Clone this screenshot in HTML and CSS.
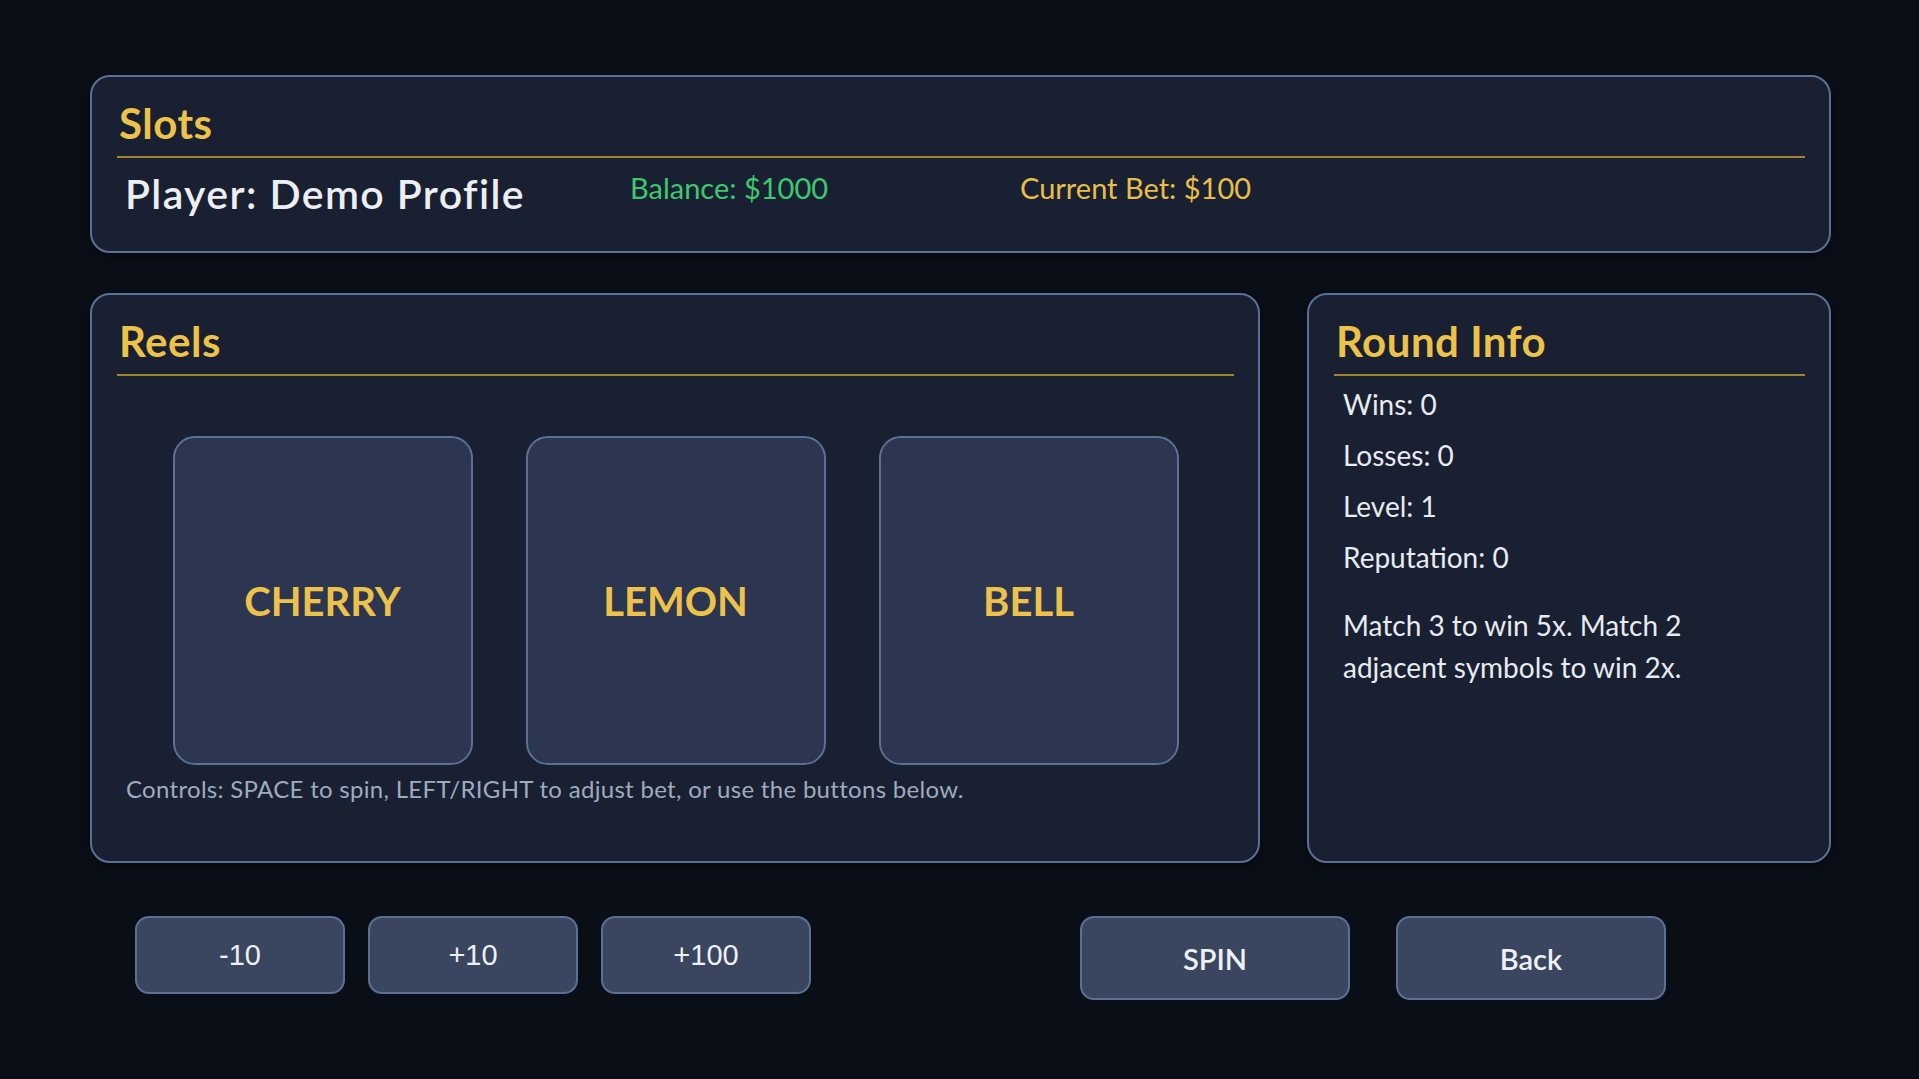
FILE: index.html
```html
<!DOCTYPE html>
<html lang="en">
  <head>
    <meta charset="UTF-8" />
    <meta name="viewport" content="width=device-width, initial-scale=1.0" />
    <title>Slots</title>
    <link rel="stylesheet" href="styles.css">
  </head>
  <body>
    <div class="screen">
      <!-- Player summary -->
      <section class="panel header-panel">
        <h1 class="panel-title">Slots</h1>
        <div class="status-row">
          <span class="player">Player: Demo Profile</span>
          <span class="balance">Balance: $1000</span>
          <span class="current-bet">Current Bet: $100</span>
        </div>
      </section>

      <div class="main-row">
        <section class="panel reels-panel">
          <h2 class="panel-title">Reels</h2>
          <div class="reels">
            <div class="reel">CHERRY</div>
            <div class="reel">LEMON</div>
            <div class="reel">BELL</div>
          </div>
          <p class="controls-hint">
            Controls: SPACE to spin, LEFT/RIGHT to adjust bet, or use the buttons below.
          </p>
        </section>

        <section class="panel info-panel">
          <h2 class="panel-title">Round Info</h2>
          <ul class="stats">
            <li>Wins: 0</li>
            <li>Losses: 0</li>
            <li>Level: 1</li>
            <li>Reputation: 0</li>
          </ul>
          <p class="rules">Match 3 to win 5x. Match 2 adjacent symbols to win 2x.</p>
        </section>
      </div>

      <div class="actions">
        <div class="bet-buttons">
          <button class="bet-button">-10</button>
          <button class="bet-button">+10</button>
          <button class="bet-button">+100</button>
        </div>
        <div class="round-buttons">
          <button class="round-button">SPIN</button>
          <button class="round-button">Back</button>
        </div>
      </div>
    </div>
  </body>
</html>
```

FILE: styles.css
```css
/* General Styles */
body {
  margin: 0;
  background-color: #0a0e16;
  font-family: "Lato", "DejaVu Sans", sans-serif;
  color: #e8ebf0;
}

.screen {
  width: 1919px;
  height: 1079px;
  box-sizing: border-box;
  padding: 75px 88px 0 90px;
}

/* Panels */
.panel {
  box-sizing: border-box;
  background-color: #182032;
  border: 2px solid #5a7096;
  border-radius: 20px;
  padding: 22px 24px 0 25px;
  box-shadow: 0 2px 6px rgba(0, 0, 0, 0.45);
}

.panel-title {
  margin: 0;
  padding: 0 0 9px 2px;
  font-size: 42px;
  line-height: 48px;
  font-weight: 700;
  letter-spacing: 0.5px;
  color: #ecc24a;
  border-bottom: 2px solid #a2822f;
}

.header-panel {
  height: 178px;
}

.status-row {
  display: grid;
  grid-template-columns: 505px 390px auto;
  align-items: start;
  margin-top: 12px;
  padding-left: 8px;
}

.player {
  font-size: 41px;
  line-height: 48px;
  font-weight: 600;
  letter-spacing: 1.4px;
  color: #eceef2;
}

.balance,
.current-bet {
  font-size: 29px;
}

.balance {
  color: #3ec86e;
}

.current-bet {
  color: #e8be4a;
}

/* Reels and round info */
.main-row {
  display: grid;
  grid-template-columns: 1170px 524px;
  gap: 47px;
  margin-top: 40px;
  height: 570px;
}

.reels {
  display: flex;
  justify-content: center;
  gap: 53px;
  margin-top: 60px;
}

.reel {
  box-sizing: border-box;
  width: 300px;
  height: 329px;
  background-color: #2c3650;
  border: 2px solid #5a7096;
  border-radius: 22px;
  display: flex;
  align-items: center;
  justify-content: center;
  font-size: 40px;
  font-weight: 700;
  color: #ecc24a;
}

.controls-hint {
  margin: 9px 0 0;
  padding-left: 9px;
  font-size: 24px;
  letter-spacing: 0.3px;
  color: #9fabbf;
}

.stats {
  list-style: none;
  margin: 3px 0 0;
  padding: 0 0 0 9px;
  font-size: 28px;
  line-height: 51px;
}

.rules {
  margin: 21px 0 0;
  padding-left: 9px;
  max-width: 400px;
  font-size: 28px;
  line-height: 42px;
}

/* Buttons */
.actions {
  display: flex;
  align-items: flex-start;
  margin-top: 53px;
  padding-left: 45px;
}

.bet-buttons,
.round-buttons {
  display: flex;
}

.bet-buttons {
  gap: 23px;
}

.round-buttons {
  gap: 46px;
  margin-left: 269px;
}

.bet-button,
.round-button {
  box-sizing: border-box;
  background-color: #3a4660;
  border: 2px solid #5b7094;
  border-radius: 14px;
  color: #eef0f4;
  cursor: pointer;
  padding: 0;
}

.bet-button {
  width: 210px;
  height: 78px;
  font-family: "Liberation Sans", Arial, sans-serif;
  font-size: 29px;
}

.round-button {
  width: 270px;
  height: 84px;
  font-family: "Lato", "DejaVu Sans", sans-serif;
  font-size: 29px;
  font-weight: 600;
}
```
